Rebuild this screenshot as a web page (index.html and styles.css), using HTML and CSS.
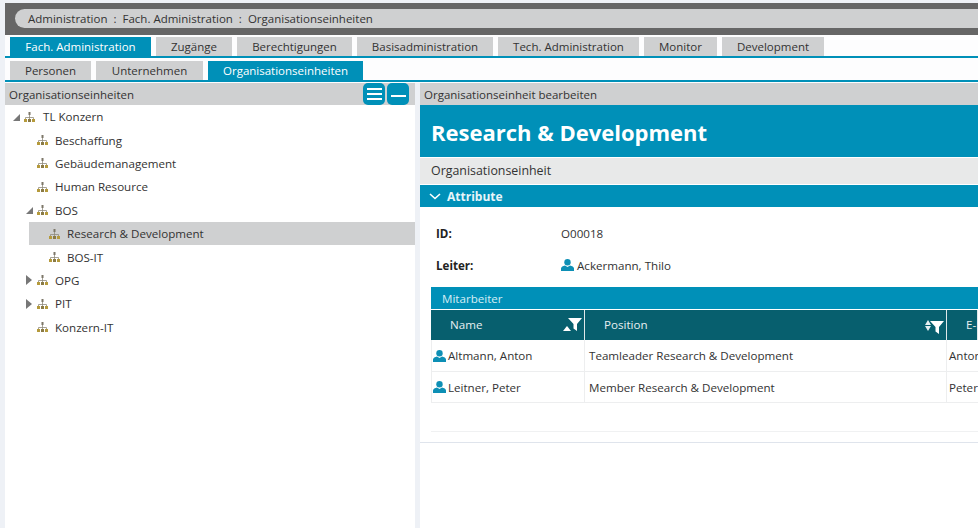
FILE: index.html
```html
<!DOCTYPE html>
<html lang="en">
<head>
    <meta charset="UTF-8">
    <title>Organisationseinheiten</title>
    <link rel="stylesheet" href="styles.css">
</head>
<body>
    <svg class="defs" width="0" height="0">
        <symbol id="org" viewBox="0 0 11 10">
            <rect x="4.5" y="0" width="2" height="3" fill="#7d7768"/>
            <path d="M5.5 3V7M1.5 7V5.5H9.5V7" stroke="#8f8a7c" stroke-width=".8" fill="none"/>
            <rect x="0" y="7" width="3" height="3" fill="#b59a3c"/>
            <rect x="4" y="7" width="3" height="3" fill="#8a7a45"/>
            <rect x="8" y="7" width="3" height="3" fill="#b59a3c"/>
        </symbol>
        <symbol id="user" viewBox="0 0 13 12">
            <circle cx="6.5" cy="3.2" r="3.2" fill="#0d8fb5"/>
            <path d="M0 12V9.6C0 8 2 7 4 6.6L6.5 8L9 6.6C11 7 13 8 13 9.6V12Z" fill="#0d8fb5"/>
        </symbol>
        <symbol id="filter" viewBox="0 0 14 13">
            <path d="M0 0H14L9 6V13L5.5 10.5V6Z" fill="#fff"/>
        </symbol>
    </svg>

    <div class="app">
        <div class="topbar">
            <div class="crumbs">
                <span>Administration</span><span class="sep">:</span><span>Fach. Administration</span><span class="sep">:</span><span>Organisationseinheiten</span>
            </div>
        </div>

        <div class="tabs main-tabs">
            <a class="tab tab-active tab-fach">Fach. Administration</a>
            <a class="tab tab-zugaenge">Zugänge</a>
            <a class="tab tab-berecht">Berechtigungen</a>
            <a class="tab tab-basis">Basisadministration</a>
            <a class="tab tab-tech">Tech. Administration</a>
            <a class="tab tab-monitor">Monitor</a>
            <a class="tab tab-dev">Development</a>
        </div>
        <div class="tabs sub-tabs">
            <a class="tab tab-personen">Personen</a>
            <a class="tab tab-unternehmen">Unternehmen</a>
            <a class="tab tab-active tab-org">Organisationseinheiten</a>
        </div>

        <div class="panels">
            <div class="left-panel">
                <div class="panel-head">
                    <span>Organisationseinheiten</span>
                    <div class="head-btns">
                        <button class="icon-btn"><span class="bars"></span></button>
                        <button class="icon-btn"><span class="dash"></span></button>
                    </div>
                </div>
                <ul class="tree">
                    <li class="node lvl-0"><span class="arrow open"></span><svg class="org"><use href="#org"/></svg>TL Konzern</li>
                    <li class="node lvl-1"><span class="arrow"></span><svg class="org"><use href="#org"/></svg>Beschaffung</li>
                    <li class="node lvl-1"><span class="arrow"></span><svg class="org"><use href="#org"/></svg>Gebäudemanagement</li>
                    <li class="node lvl-1"><span class="arrow"></span><svg class="org"><use href="#org"/></svg>Human Resource</li>
                    <li class="node lvl-1"><span class="arrow open"></span><svg class="org"><use href="#org"/></svg>BOS</li>
                    <li class="node lvl-2 selected"><span class="arrow"></span><svg class="org"><use href="#org"/></svg>Research &amp; Development</li>
                    <li class="node lvl-2"><span class="arrow"></span><svg class="org"><use href="#org"/></svg>BOS-IT</li>
                    <li class="node lvl-1"><span class="arrow closed"></span><svg class="org"><use href="#org"/></svg>OPG</li>
                    <li class="node lvl-1"><span class="arrow closed"></span><svg class="org"><use href="#org"/></svg>PIT</li>
                    <li class="node lvl-1"><span class="arrow"></span><svg class="org"><use href="#org"/></svg>Konzern-IT</li>
                </ul>
            </div>

            <div class="right-panel">
                <div class="panel-head">
                    <span>Organisationseinheit bearbeiten</span>
                </div>
                <div class="hero">Research &amp; Development</div>
                <div class="subtitle">Organisationseinheit</div>
                <div class="section-bar">
                    <svg class="chevron" viewBox="0 0 12 7"><path d="M1 1L6 5.5L11 1" stroke="#fff" stroke-width="1.6" fill="none"/></svg>
                    Attribute
                </div>
                <div class="card">
                    <div class="field field-id">
                        <label>ID:</label>
                        <span>O00018</span>
                    </div>
                    <div class="field field-leiter">
                        <label>Leiter:</label>
                        <span class="person"><svg class="user"><use href="#user"/></svg>Ackermann, Thilo</span>
                    </div>

                    <div class="table-title">Mitarbeiter</div>
                    <div class="grid grid-head">
                        <div class="cell col-name">Name
                            <span class="head-icons"><i class="sort-up"></i><svg class="filter"><use href="#filter"/></svg></span>
                        </div>
                        <div class="cell col-pos">Position
                            <span class="head-icons"><i class="sort-both"></i><svg class="filter"><use href="#filter"/></svg></span>
                        </div>
                        <div class="cell col-mail">E-Mail</div>
                    </div>
                    <div class="grid grid-row row-first">
                        <div class="cell col-name"><svg class="user"><use href="#user"/></svg>Altmann, Anton</div>
                        <div class="cell col-pos">Teamleader Research &amp; Development</div>
                        <div class="cell col-mail">Anton</div>
                    </div>
                    <div class="grid grid-row">
                        <div class="cell col-name"><svg class="user"><use href="#user"/></svg>Leitner, Peter</div>
                        <div class="cell col-pos">Member Research &amp; Development</div>
                        <div class="cell col-mail">Peter</div>
                    </div>
                    <div class="table-foot"></div>
                </div>
            </div>
        </div>
    </div>
</body>
</html>
```

FILE: styles.css
```css
html, body {
    margin: 0;
    padding: 0;
    height: 100%;
    overflow: hidden;
}

body {
    font-family: "Open Sans", "Liberation Sans", sans-serif;
    font-size: 11.6px;
    color: #333;
    background-color: #eef1f6;
}

.defs {
    position: absolute;
}

.app {
    height: 525px;
    margin: 3px 0 0 5px;
    background-color: #fdfdfe;
    display: flex;
    flex-direction: column;
}

/* top bar */
.topbar {
    height: 32px;
    box-sizing: border-box;
    padding: 6px 0 7px 10px;
    background-color: #666;
}

.crumbs {
    height: 19px;
    line-height: 19px;
    padding-left: 13px;
    background-color: #cfd0d1;
    border-radius: 10px 0 0 10px;
    color: #333;
    font-size: 11.5px;
}

.sep {
    margin: 0 6px;
}

/* tabs */
.tabs {
    display: flex;
    align-items: flex-end;
    gap: 5px;
    padding-left: 5px;
    border-bottom: 2px solid #0090b8;
}

.main-tabs {
    height: 19px;
    margin-top: 2px;
}

.sub-tabs {
    height: 22px;
}

.tab {
    height: 19px;
    line-height: 20px;
    text-align: center;
    background-color: #cfd0d1;
    color: #333;
    font-size: 11.5px;
}

.tab-active {
    background-color: #0090b8;
    color: #fff;
}

.tab-fach { width: 141px; }
.tab-zugaenge { width: 76px; }
.tab-berecht { width: 115px; }
.tab-basis { width: 136px; }
.tab-tech { width: 141px; }
.tab-monitor { width: 73px; }
.tab-dev { width: 102px; }
.tab-personen { width: 81px; }
.tab-unternehmen { width: 107px; }
.tab-org { width: 155px; }

/* panels */
.panels {
    flex: 1;
    display: flex;
    gap: 5px;
    margin-top: 1px;
    min-height: 0;
    background-color: #eef1f6;
}

.left-panel {
    width: 410px;
    background-color: #fff;
}

.right-panel {
    flex: 1;
    min-width: 0;
    background-color: #fff;
}

.panel-head {
    height: 22px;
    line-height: 24px;
    padding-left: 4px;
    background-color: #cfd0d1;
    color: #333;
    font-size: 11.5px;
    display: flex;
    justify-content: space-between;
}

.head-btns {
    display: flex;
    gap: 2px;
    margin-right: 6px;
}

.icon-btn {
    width: 22px;
    height: 22px;
    padding: 0;
    border: none;
    border-radius: 5px;
    background-color: #0090b8;
    display: flex;
    align-items: center;
    justify-content: center;
}

.bars {
    width: 15px;
    height: 2px;
    background-color: #fff;
    box-shadow: 0 -5px 0 #fff, 0 5px 0 #fff;
}

.dash {
    width: 15px;
    height: 2px;
    margin-top: 3px;
    background-color: #fff;
}

/* tree */
.tree {
    list-style: none;
    margin: 0;
    padding: 0;
}

.node {
    height: 23.4px;
    line-height: 23px;
    display: flex;
    align-items: center;
    color: #333;
}

.lvl-0 { padding-left: 8px; }
.lvl-1 { padding-left: 21px; }
.lvl-2 { margin-left: 24px; padding-left: 9px; }

.arrow {
    width: 11px;
    height: 10px;
    flex: none;
    position: relative;
}

.arrow.open::after {
    content: "";
    position: absolute;
    left: 0;
    bottom: 1px;
    border-style: solid;
    border-width: 0 0 7px 7px;
    border-color: transparent transparent #777 transparent;
}

.arrow.closed::after {
    content: "";
    position: absolute;
    left: 0;
    top: 0;
    border-style: solid;
    border-width: 5px 0 5px 6px;
    border-color: transparent transparent transparent #777;
}

.org {
    width: 11px;
    height: 10px;
    flex: none;
    margin-right: 7px;
}

.lvl-0 .org { margin-right: 8px; }

.selected {
    background-color: #cfd0d1;
}

/* detail */
.hero {
    height: 52px;
    line-height: 55px;
    padding-left: 11px;
    background-color: #0090b8;
    color: #fff;
    font-size: 22px;
    font-weight: 700;
}

.subtitle {
    height: 26px;
    line-height: 26px;
    margin-top: 1px;
    padding-left: 11px;
    background-color: #e8e9e9;
    color: #333;
    font-size: 12.4px;
}

.section-bar {
    height: 22px;
    line-height: 23px;
    margin-top: 1px;
    padding-left: 9px;
    background-color: #0090b8;
    color: #e8f5f9;
    font-size: 12px;
    font-weight: 700;
    display: flex;
    align-items: center;
    gap: 6px;
}

.chevron {
    width: 12px;
    height: 7px;
}

.card {
    height: 236px;
    box-sizing: border-box;
    padding: 10px 0 0 11px;
    border-bottom: 1px solid #dfe4ec;
}

.field {
    height: 32px;
    display: flex;
    align-items: center;
    color: #333;
}

.field label {
    width: 130px;
    padding-left: 5px;
    box-sizing: border-box;
    font-weight: 700;
    color: #222;
}

.person {
    display: flex;
    align-items: center;
}

.user {
    width: 13px;
    height: 12px;
    flex: none;
    margin-right: 2px;
}

.person .user {
    margin-right: 3px;
}

.table-title {
    height: 22px;
    line-height: 23px;
    margin-top: 6px;
    padding-left: 11px;
    background-color: #0090b8;
    color: #d6eef5;
}

.grid {
    display: grid;
    grid-template-columns: 154px 362px 1fr;
}

.grid-head {
    height: 30px;
    margin-top: 1px;
    background-color: #075f6e;
    color: #e6eff1;
}

.grid-head .cell {
    padding-left: 19px;
    line-height: 30px;
    border-right: 1px solid #dfe8ea;
    position: relative;
    white-space: nowrap;
    overflow: hidden;
}

.head-icons {
    position: absolute;
    right: 2px;
    top: 8px;
    display: flex;
    align-items: center;
}

.filter {
    width: 14px;
    height: 13px;
}

.sort-up {
    width: 0;
    height: 0;
    border-style: solid;
    border-width: 0 4px 5px 4px;
    border-color: transparent transparent #fff transparent;
    margin: 8px -3px 0 0;
}

.sort-both {
    width: 0;
    height: 0;
    border-style: solid;
    border-width: 5px 3px;
    border-color: transparent;
    border-top-color: #e6eff1;
    margin: 8px -1px 0 0;
    position: relative;
}

.sort-both::before {
    content: "";
    position: absolute;
    left: -3px;
    top: -11px;
    border-style: solid;
    border-width: 0 3px 5px 3px;
    border-color: transparent transparent #e6eff1 transparent;
}

.grid-row {
    height: 30px;
    border-bottom: 1px solid #edeeef;
    box-shadow: inset 1px 0 0 #edeeef;
}

.row-first {
    height: 31px;
}

.grid-row .cell {
    padding-left: 4px;
    border-right: 1px solid #edeeef;
    color: #333;
    white-space: nowrap;
    overflow: hidden;
    display: flex;
    align-items: center;
}

.grid-row .col-name {
    padding-left: 2px;
}

.grid-row .col-mail {
    padding-left: 2px;
    border-right: none;
}

.table-foot {
    height: 28px;
    border-bottom: 1px solid #f0f1f2;
}
```
